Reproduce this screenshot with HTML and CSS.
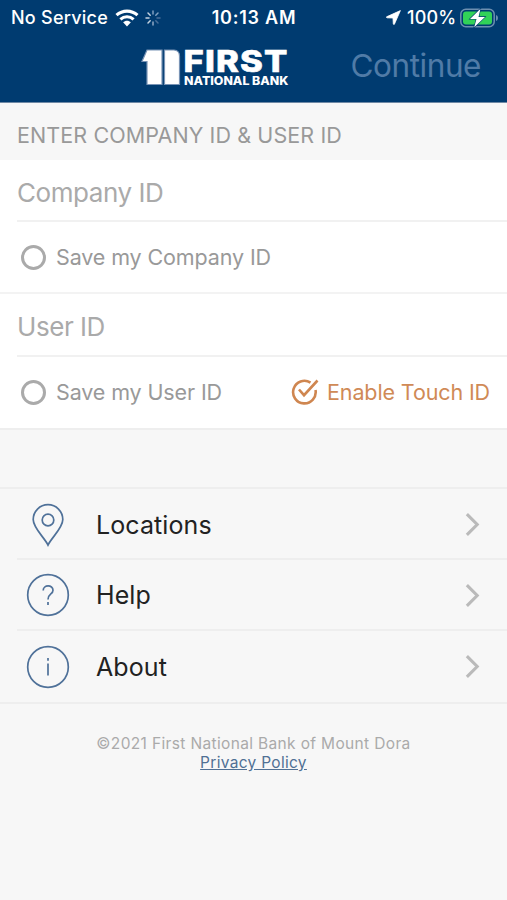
FILE: index.html
```html
<!DOCTYPE html>
<html lang="en">
<head>
<meta charset="utf-8">
<title>First National Bank</title>
<link rel="stylesheet" href="styles.css">
</head>
<body>
<header class="header">
  <div class="status">
    <div class="status-left">
      <span class="carrier">No Service</span>
      <svg class="wifi" width="24" height="18" viewBox="0 0 24 18">
        <g fill="none" stroke="#fff" stroke-width="3.1"><path d="M1.5 6.2C7.5.7 16.5.7 22.5 6.2"/><path d="M5.4 10.4C9.2 6.9 14.8 6.9 18.6 10.4"/></g>
        <path fill="#fff" d="M8.1 13.3C10.3 11.2 13.7 11.2 15.9 13.3L12 17.4Z"/>
      </svg>
      <svg class="spinner" width="16" height="16" viewBox="-8 -8 16 16" stroke-width="1.5" stroke-linecap="round">
        <path stroke="#7e9fc0" d="M0-4V-7M2.8-2.8L5-5"/><path stroke="#496f99" d="M4 0H7M2.8 2.8L5 5"/><path stroke="#8fa9c4" d="M0 4V7"/><path stroke="#c5d2df" d="M-2.8 2.8L-5 5M-4 0H-7M-2.8-2.8L-5-5"/>
      </svg>
    </div>
    <span class="time">10:13 AM</span>
    <div class="status-right">
      <svg class="arrow" width="15" height="15" viewBox="0 0 15 15"><path fill="#fff" stroke="#fff" stroke-width=".8" stroke-linejoin="round" d="M14.4.6L.6 6.8Q.3 7.700 1 7.800L7 8 7.300 14Q7.700 14.900 8.400 14.200Z"/></svg>
      <span class="percent">100%</span>
      <svg class="battery" width="38" height="20" viewBox="0 0 38 20">
        <rect x=".8" y="1.3" width="33.4" height="17.4" rx="5" fill="none" stroke="#6d8fb0" stroke-width="1.5"/>
        <path d="M36 7v6Q38 12.500 38 10T36 7Z" fill="#6d8fb0"/>
        <rect x="3" y="3.500" width="29" height="13" rx="3" fill="#31d158"/>
        <path d="M20.500.8L10 11H16.500L14.200 19.200 25 8.900H18.500Z" fill="#fff" stroke="#003b70" stroke-width="1.200" paint-order="stroke"/>
      </svg>
    </div>
  </div>
  <div class="navbar">
    <svg class="logo" width="150" height="42" viewBox="0 0 150 42">
      <g fill="#fff" stroke="#7893b5" stroke-width="1.200"><path d="M7 4H22V38.500H7V15.500H2Z"/><path d="M24.500 4H34Q39.500 4.500 39.500 10V38.500H24.500Z"/></g>
      <text class="logo-first" x="43.500" y="25.700" textLength="105" lengthAdjust="spacingAndGlyphs">FIRST</text>
      <text class="logo-bank" x="44" y="38.700" textLength="104.500" lengthAdjust="spacingAndGlyphs">NATIONAL BANK</text>
    </svg>
    <span class="continue">Continue</span>
  </div>
</header>
<main>
  <h1 class="section-title">ENTER COMPANY ID &amp; USER ID</h1>
  <section class="form">
    <div class="field company">Company ID</div>
    <div class="option first">
      <span class="radio"></span><span class="label">Save my Company ID</span>
    </div>
    <div class="field user">User ID</div>
    <div class="option second">
      <span class="radio"></span><span class="label">Save my User ID</span>
      <div class="touch">
        <svg width="28" height="28" viewBox="0 0 28 28" fill="none" stroke="#cf8650" stroke-width="2.600"><path d="M19.500 4.600A11.300 11.300 0 1 0 24.500 12"/><path d="M8 11.500L13 17.200 26.500 2.500"/></svg>
        <span class="label">Enable Touch ID</span>
      </div>
    </div>
  </section>
  <nav class="menu">
    <div class="item locations">
      <svg class="icon" viewBox="0 0 44 44"><path d="M22 42C18 34 7.200 25 7.200 16.500A14.800 14.800 0 0 1 36.800 16.500C36.800 25 26 34 22 42Z"/><circle cx="22" cy="17" r="5.800"/></svg>
      <div class="row"><span>Locations</span><svg class="chevron" viewBox="0 0 16 26"><path d="M2 2L13 13 2 24"/></svg></div>
    </div>
    <div class="item help">
      <svg class="icon" viewBox="0 0 44 44"><circle cx="22" cy="22" r="20.300"/><path d="M17.200 17.500C17.200 11.500 27 11.500 27 17.200 27 21.500 22 20.500 22 26.500M22 29V32"/></svg>
      <div class="row"><span>Help</span><svg class="chevron" viewBox="0 0 16 26"><path d="M2 2L13 13 2 24"/></svg></div>
    </div>
    <div class="item about">
      <svg class="icon" viewBox="0 0 44 44"><circle cx="22" cy="22" r="20.300"/><path d="M22 18.500V30.500M22 13V15.700"/></svg>
      <div class="row"><span>About</span><svg class="chevron" viewBox="0 0 16 26"><path d="M2 2L13 13 2 24"/></svg></div>
    </div>
  </nav>
</main>
<footer class="footer">
  <div class="copyright">©2021 First National Bank of Mount Dora</div>
  <a class="privacy">Privacy Policy</a>
</footer>
</body>
</html>
```

FILE: styles.css
```css
* { box-sizing: border-box; }
body { margin: 0; min-height: 900px; background: #f7f7f7; font-family: Inter, "Liberation Sans", sans-serif; white-space: nowrap; overflow: hidden; }
svg { display: block; flex: none; }
.header { height: 103px; background: #003b70; color: #fff; border-bottom: 1px solid #7089a5; }
.status { display: grid; grid-template-columns: 200px 108px 1fr; height: 34px; font-size: 18px; font-weight: 500; line-height: 35px; }
.status-left, .status-right { display: flex; align-items: center; }
.status-left { padding-left: 11px; }
.carrier { width: 104px; letter-spacing: .25px; }
.spinner { margin-left: 6px; }
.time { text-align: center; font-weight: 600; letter-spacing: .75px; }
.status-right { padding-left: 78px; }
.percent { width: 53px; margin-left: 6px; letter-spacing: .2px; }
.navbar { display: grid; grid-template-columns: 150px 1fr; padding: 12px 26px 0 140px; }
.logo { overflow: visible; }
.logo-first { font: 800 30px Inter, sans-serif; letter-spacing: 1px; fill: #fff; stroke: #fff; stroke-width: .6px; }
.logo-bank { font: 800 11.500px Inter, sans-serif; fill: #fff; }
.continue { text-align: right; color: #507ba7; font-size: 31.500px; letter-spacing: -.45px; line-height: 40px; }
.section-title { margin: 0; height: 57px; padding-left: 17px; font-size: 21.500px; font-weight: 400; letter-spacing: .1px; line-height: 64px; color: #999; }
.form { background: #fff; border-bottom: 2px solid #eee; height: 270px; }
.field { height: 62px; margin-left: 17px; border-bottom: 2px solid #f1f1f1; color: #aaa; font-size: 26px; letter-spacing: -.45px; line-height: 66px; }
.field.user { height: 63px; }
.option { display: flex; align-items: center; height: 72px; padding: 0 17px 0 21px; color: #999; font-size: 21.500px; letter-spacing: -.12px; }
.option.first { border-bottom: 2px solid #f3f3f3; }
.option.second { height: 70px; }
.radio { width: 25px; height: 25px; border: 3px solid #aaa; border-radius: 50%; margin-right: 10px; flex: none; }
.touch { display: flex; align-items: center; gap: 8px; margin-left: auto; color: #d08a56; }
.menu { margin-top: 57px; border-top: 2px solid #eee; border-bottom: 2px solid #eee; }
.item { display: flex; height: 71px; padding-left: 26px; align-items: center; background: linear-gradient(#eee, #eee) 17px 100% / 100% 2px no-repeat; }
.item.help { padding-bottom: 1px; }
.item.about { background: none; }
.icon { width: 44px; height: 44px; fill: none; stroke: #4f7199; stroke-width: 1.700; }
.row { display: flex; flex: 1; align-items: center; justify-content: space-between; padding: 0 27px 0 26px; color: #222; font-size: 25px; letter-spacing: .1px; }
.chevron { width: 15px; height: 25px; fill: none; stroke: #bababa; stroke-width: 3.300; }
.footer { padding-top: 30px; text-align: center; color: #aaa; font-size: 15.500px; line-height: 19px; }
.copyright { letter-spacing: .35px; }
.privacy { color: #507094; text-decoration: underline; letter-spacing: .3px; }
```
